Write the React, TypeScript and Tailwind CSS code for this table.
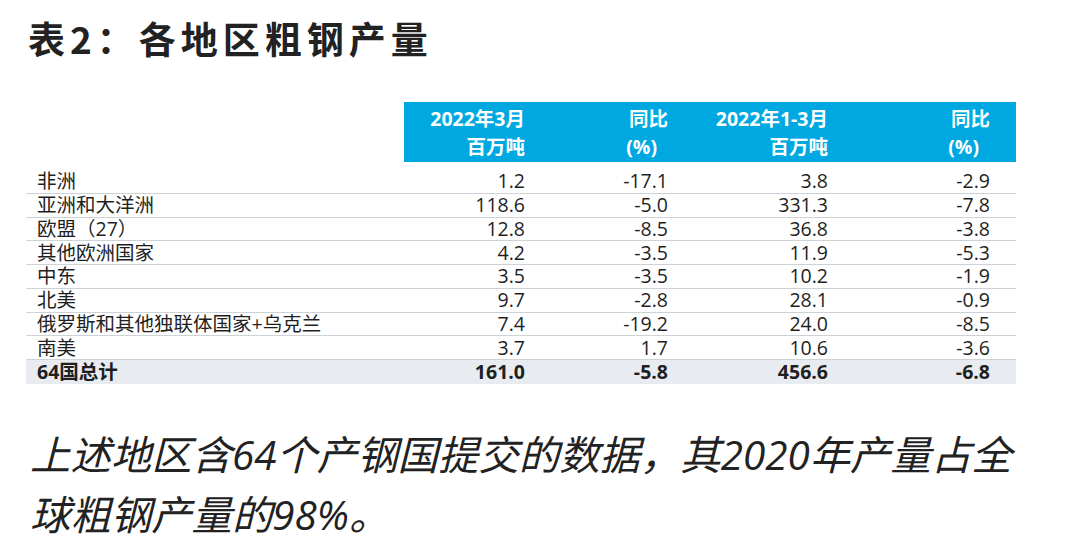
import React from "react";

const CJK = '"Open Sans", "Noto Sans CJK SC", sans-serif';

const rows: [string, string, string, string, string][] = [
  ["非洲", "1.2", "-17.1", "3.8", "-2.9"],
  ["亚洲和大洋洲", "118.6", "-5.0", "331.3", "-7.8"],
  ["欧盟（27）", "12.8", "-8.5", "36.8", "-3.8"],
  ["其他欧洲国家", "4.2", "-3.5", "11.9", "-5.3"],
  ["中东", "3.5", "-3.5", "10.2", "-1.9"],
  ["北美", "9.7", "-2.8", "28.1", "-0.9"],
  ["俄罗斯和其他独联体国家+乌克兰", "7.4", "-19.2", "24.0", "-8.5"],
  ["南美", "3.7", "1.7", "10.6", "-3.6"],
];

export default function App() {
  return (
    <div className="w-[1069px] h-[554px] bg-white overflow-hidden text-[#1f1f1f]" style={{ fontFamily: CJK }}>
      <div
        className="pt-[16px] pl-[28px] text-[37px] leading-[44px] font-bold tracking-[5px] text-[#222]"
        style={{ fontFamily: '"Noto Sans CJK SC", sans-serif' }}
      >
        表2：各地区粗钢产量
      </div>

      <div className="mt-[42px] ml-[26px] w-[990px]">
        {/* header */}
        <div className="flex h-[60px]">
          <div className="w-[378px] bg-white" />
          <div className="flex flex-1 bg-[#00a8e1] text-white font-bold text-[19.5px] leading-[28px] pt-[3px]">
            <div className="w-[121px] text-right">
              <div>2022年3月</div>
              <div>百万吨</div>
            </div>
            <div className="w-[143px] text-right">
              <div>同比</div>
              <div className="pr-[11px]">(%)</div>
            </div>
            <div className="w-[160px] text-right">
              <div>2022年1-3月</div>
              <div>百万吨</div>
            </div>
            <div className="w-[162px] text-right">
              <div>同比</div>
              <div className="pr-[11px]">(%)</div>
            </div>
          </div>
        </div>

        <div className="mt-[8px]">
          {rows.map((r) => (
            <div key={r[0]} className="flex h-[23.75px] items-center border-b border-[#cdd2d7] text-[19.5px] leading-[20px]">
              <div className="w-[378px] pl-[11px] whitespace-nowrap">{r[0]}</div>
              <div className="w-[121px] text-right">{r[1]}</div>
              <div className="w-[143px] text-right">{r[2]}</div>
              <div className="w-[160px] text-right">{r[3]}</div>
              <div className="w-[162px] text-right">{r[4]}</div>
            </div>
          ))}
          <div className="flex h-[23.75px] items-center bg-[#e8ecf0] font-bold text-[19.5px] leading-[20px]">
            <div className="w-[378px] pl-[11px]">64国总计</div>
            <div className="w-[121px] text-right">161.0</div>
            <div className="w-[143px] text-right">-5.8</div>
            <div className="w-[160px] text-right">456.6</div>
            <div className="w-[162px] text-right">-6.8</div>
          </div>
        </div>
      </div>

      <div className="mt-[41px] pl-[30px] pr-[10px] text-[40.4px] leading-[60px] italic text-[#222] whitespace-nowrap">
        上述地区含64个产钢国提交的数据，其2020年产量占全
        <br />
        球粗钢产量的98%。
      </div>
    </div>
  );
}
